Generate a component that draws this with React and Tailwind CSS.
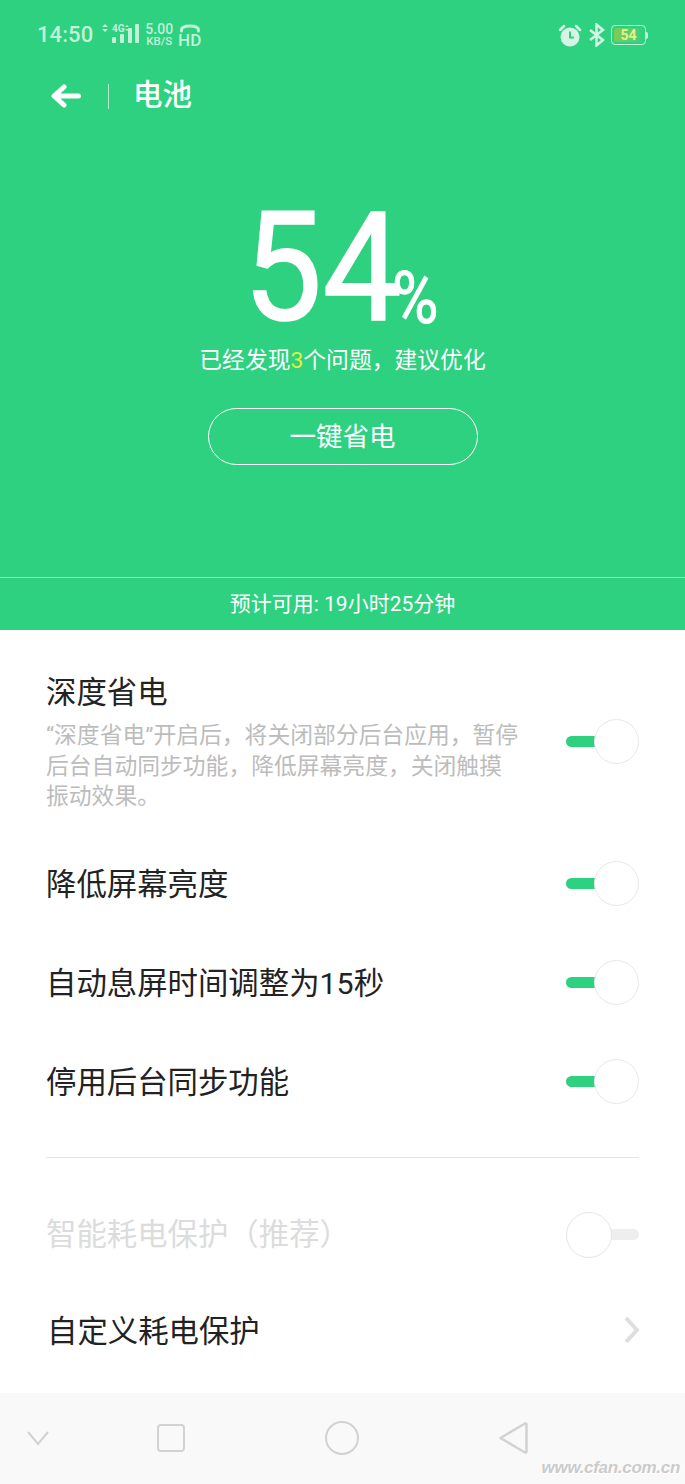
import { useState } from 'react';

const CJK = 'font-["Roboto","Noto_Sans_CJK_SC",sans-serif]';

function Toggle({ on }) {
  if (on) {
    return (
      <div className="flex items-center w-[73px] shrink-0">
        <div className="w-[32px] h-[11px] rounded-l-full bg-[#2dd17f] -mr-[4px]" />
        <div className="relative w-[45px] h-[45px] rounded-full bg-white border-[1.5px] border-[#e8e8e8]" />
      </div>
    );
  }
  return (
    <div className="flex items-center w-[73px] shrink-0">
      <div className="relative z-10 w-[46px] h-[46px] rounded-full bg-white border-[1.5px] border-[#e6e6e6]" />
      <div className="w-[29px] h-[11px] rounded-r-full bg-[#eeeeee] -ml-[2px]" />
    </div>
  );
}

function StatusLeft() {
  return (
    <div className="flex items-center text-[#c4f0d8]">
      <span className="text-[22px] leading-none font-medium tracking-[0.1px]">14:50</span>
      <svg className="ml-[7px]" width="40" height="26" viewBox="0 0 40 26" fill="currentColor">
        <path d="M2 5l3-3 3 3zM2 7h6l-3 3z" />
        <text x="12" y="10" fontSize="10" fontWeight="700" fontFamily="Roboto, sans-serif">4G</text>
        <path d="M25 5l2-2 2 2zM25 7h4l-2 2z" />
        <rect x="12" y="15" width="4" height="6" rx="1" />
        <rect x="20" y="12" width="4" height="9" rx="1" />
        <rect x="28" y="6" width="4" height="15" rx="1" />
        <rect x="35" y="2" width="4" height="19" rx="1" />
      </svg>
      <div className="ml-[5px] flex flex-col items-center leading-none font-medium">
        <span className="text-[14px] leading-[12px]">5.00</span>
        <span className="text-[11.500px] leading-[11px] mt-[1px]">KB/S</span>
      </div>
      <div className="ml-[5px] flex flex-col items-center">
        <svg width="22" height="9" viewBox="0 0 22 9" fill="none" stroke="currentColor" strokeWidth="3" strokeLinecap="round">
          <path d="M2.500 7V6C2.500 3 6 2 11 2s8.500 1 8.500 4v1" />
        </svg>
        <span className="text-[17px] leading-[13px] font-medium mt-[1px]">HD</span>
      </div>
    </div>
  );
}

function StatusRight() {
  return (
    <div className="flex items-center text-[#c4f0d8] pr-[1px]">
      <svg width="24" height="24" viewBox="0 0 24 24">
        <path d="M2 7l4-4M22 7l-4-4" stroke="#d5f4e3" strokeWidth="2.500" strokeLinecap="round" />
        <circle cx="12" cy="14" r="9.500" fill="#d5f4e3" />
        <path d="M12 8.500V14.500H16" stroke="#2dd17f" strokeWidth="2" fill="none" />
      </svg>
      <svg className="ml-[6px]" width="18" height="24" viewBox="0 0 18 24" fill="none" stroke="#d5f4e3" strokeWidth="2.500">
        <path d="M2 7l13 10-6.500 5.500V1.500L15 7 2 17" />
      </svg>
      <div className="ml-[5px] flex items-center">
        <div className="w-[35px] h-[20px] rounded-[4px] border border-[#c4f0d8] p-[2px] flex">
          <div className="w-full h-full rounded-[2px] bg-gradient-to-r from-[#7ccb55] to-[#2dd17f] text-[#e6f08a] text-[14px] leading-[14px] font-bold text-center">54</div>
        </div>
        <div className="w-[2px] h-[7px] bg-[#c4f0d8] rounded-r" />
      </div>
    </div>
  );
}

function Row({ label, on, className }) {
  return (
    <div className={`flex items-center justify-between pl-[46px] pr-[46px] ${className}`}>
      <span className="mt-[3px] text-[30.400px] leading-none text-[#222]">{label}</span>
      <Toggle on={on} />
    </div>
  );
}

function NavBar() {
  return (
    <div className="relative h-[91px] bg-[#f9f9f9] flex items-center pl-[26px] pb-[2px]">
      <svg width="24" height="16" viewBox="0 0 24 16" fill="none" stroke="#d2d2d2" strokeWidth="2">
        <path d="M2 2l10 12L22 2" />
      </svg>
      <div className="ml-[107px] w-[28px] h-[28px] rounded-[4px] border-2 border-[#d2d2d2]" />
      <div className="ml-[140px] w-[34px] h-[34px] rounded-full border-2 border-[#d2d2d2]" />
      <svg className="ml-[139px]" width="32" height="34" viewBox="0 0 32 34" fill="none" stroke="#d2d2d2" strokeWidth="2.500" strokeLinejoin="round">
        <path d="M2.500 17L27 2.500a1 1 0 0 1 1.500 1v27a1 1 0 0 1-1.500 1z" />
      </svg>
      <span className="absolute right-[5px] bottom-[8px] text-[17px] leading-none italic font-bold tracking-[-0.3px] text-[#cbcbcb] [text-shadow:1px_1px_0_#ffffff] font-['Liberation_Sans',sans-serif]">www.cfan.com.cn</span>
    </div>
  );
}

export default function App() {
  const [rows] = useState([
    { label: '降低屏幕亮度', on: true },
    { label: '自动息屏时间调整为15秒', on: true },
    { label: '停用后台同步功能', on: true },
  ]);

  return (
    <div className={`w-[685px] h-[1484px] flex flex-col bg-white overflow-hidden ${CJK}`}>
      <div className="h-[630px] bg-[#2dd17f] flex flex-col text-white">
        <div className="h-[70px] pl-[37px] pr-[36px] flex items-center justify-between">
          <StatusLeft />
          <StatusRight />
        </div>
        <div className="h-[52px] flex items-center pl-[51px]">
          <svg width="30" height="24" viewBox="0 0 30 24" fill="none" stroke="white" strokeWidth="5" strokeLinecap="round" strokeLinejoin="round">
            <path d="M27.500 12H4M13 3l-10 9 10 9" />
          </svg>
          <div className="ml-[27px] w-px h-[25px] bg-white/60" />
          <span className="ml-[24px] text-[29.500px] leading-none font-medium">电池</span>
        </div>
        <div className="mt-[88px] h-[116px] flex items-end pl-[243px]">
          <span className="w-[155px] text-[152px] leading-[116px] [-webkit-text-stroke:1.5px_white] origin-left scale-x-[.93]">54</span>
          <span className="h-[55px] w-[42px] -ml-[6px] text-[72px] leading-[55px] [-webkit-text-stroke:1px_white] origin-left scale-x-[.88]">%</span>
        </div>
        <p className="mt-[18px] text-center text-[22.800px] leading-[34px]">
          已经发现<span className="text-[#e2ef3b]">3</span>个问题，建议优化
        </p>
        <div className="mt-[30px] mx-auto w-[270px] h-[57px] rounded-full border-[1.5px] border-white flex items-center justify-center text-[26.500px]">
          一键省电
        </div>
        <div className="mt-auto h-[53px] pt-[2px] border-t border-white/50 flex items-center justify-center text-[21px]">
          预计可用: 19小时25分钟
        </div>
      </div>

      <div className="flex-1 flex flex-col">
        <div className="mt-[45px] flex items-start justify-between px-[46px]">
          <div className="w-[476px]">
            <h2 className="text-[30.400px] leading-[36px] text-[#222] font-normal">深度省电</h2>
            <p className="mt-[10px] text-[22.800px] leading-[30.500px] text-[#bcbcbc]">“深度省电”开启后，将关闭部分后台应用，暂停后台自动同步功能，降低屏幕亮度，关闭触摸振动效果。</p>
          </div>
          <div className="mt-[44px]"><Toggle on /></div>
        </div>
        <Row label={rows[0].label} on={rows[0].on} className="mt-[33px] h-[76px]" />
        <Row label={rows[1].label} on={rows[1].on} className="mt-[23px] h-[76px]" />
        <Row label={rows[2].label} on={rows[2].on} className="mt-[23px] h-[76px]" />
        <div className="mt-[37px] mx-[46px] h-px bg-[#e6e6e6]" />
        <div className="mt-[39px] h-[76px] flex items-center justify-between pl-[46px] pr-[46px]">
          <span className="mt-[2px] text-[30.400px] leading-none text-[#dcdcdc]">智能耗电保护（推荐）</span>
          <Toggle on={false} />
        </div>
        <div className="mt-[20px] h-[76px] flex items-center justify-between pl-[47px] pr-[45px]">
          <span className="mt-[3px] text-[30.400px] leading-none text-[#222]">自定义耗电保护</span>
          <svg className="-mt-[2px]" width="16" height="28" viewBox="0 0 16 28" fill="none" stroke="#dedede" strokeWidth="4">
            <path d="M2 2l11 12L2 26" />
          </svg>
        </div>
      </div>

      <NavBar />
    </div>
  );
}
